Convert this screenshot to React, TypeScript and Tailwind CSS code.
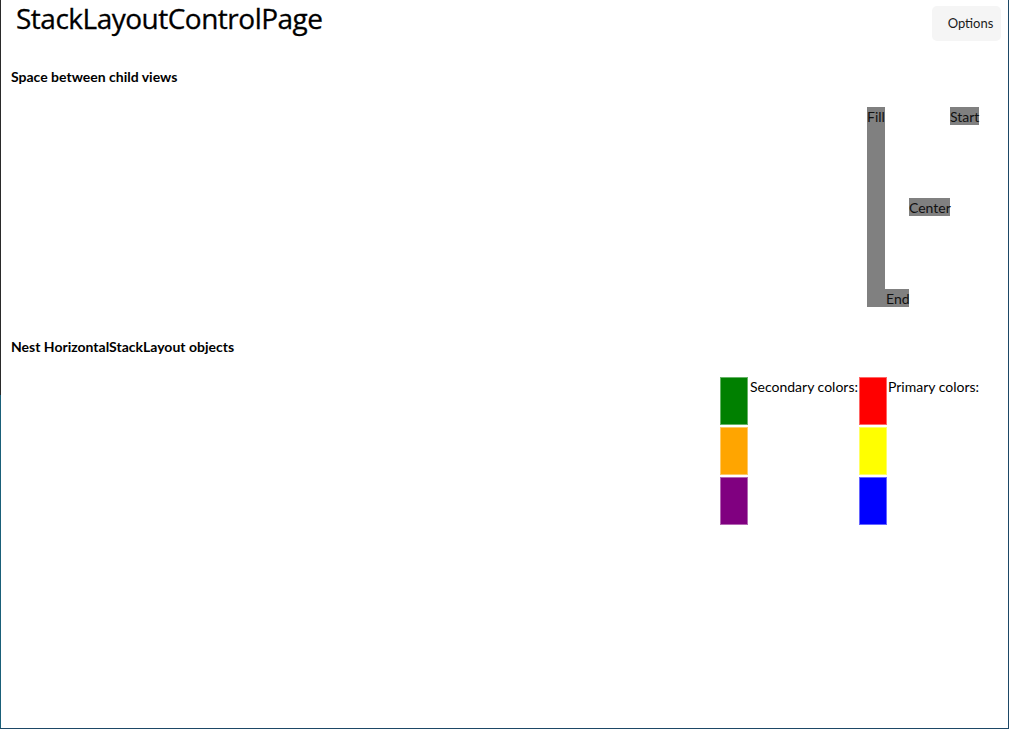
import React from 'react';

const font = { fontFamily: 'Lato, "Open Sans", sans-serif' };

const Tag: React.FC<{ label: string; className: string }> = ({ label, className }) => (
  <div className={`bg-[#808080] text-[14px] leading-[18px] text-[#111] whitespace-nowrap ${className}`}>
    {label}
  </div>
);

const Swatch: React.FC<{ color: string }> = ({ color }) => (
  <div className={`w-[28px] h-[48px] ring-1 ring-inset ring-white/40 ${color}`} />
);

const App: React.FC = () => {
  return (
    <div className="w-[1009px] h-[729px] flex bg-white border-r border-b border-[#1d4866] overflow-hidden" style={font}>
      {/* window edge: dark on top, teal lower down */}
      <div className="w-px flex flex-col shrink-0">
        <div className="h-[395px] bg-[#2a2a2a]" />
        <div className="flex-1 bg-[#1a6079]" />
      </div>

      <div className="flex-1 flex flex-col">
        <div className="flex items-start justify-between pl-[15px] pr-[7px]">
          <h1
            className="text-[28px] leading-[36px] text-black"
            style={{ fontFamily: '"Open Sans", sans-serif', letterSpacing: '-0.5px', WebkitTextStroke: '0.3px #000' }}
          >
            StackLayoutControlPage
          </h1>
          <button className="mt-[6px] w-[69px] h-[35px] rounded-[5px] bg-[#f5f5f5] text-[13px] text-[#1b1b1b] pl-[8px]">
            Options
          </button>
        </div>

        <h2 className="mt-[27px] pl-[10px] text-[14px] leading-[18px] font-bold text-black">Space between child views</h2>

        <div className="mt-[21px] h-[200px] flex justify-end pr-[29px]">
          <Tag label="Fill" className="w-[18px] self-stretch pt-[1px]" />
          <Tag label="End" className="w-[24px] h-[18px] self-end pl-[1px] pt-[1px]" />
          <Tag label="Center" className="w-[41px] h-[18px] self-center pt-[1px]" />
          <Tag label="Start" className="w-[29px] h-[18px] self-start pt-[1px]" />
        </div>

        <h2 className="mt-[31px] pl-[10px] text-[14px] leading-[18px] font-bold text-black">Nest HorizontalStackLayout objects</h2>

        <div className="mt-[21px] flex justify-end pr-[29px]">
          <div className="flex">
            <div className="flex flex-col gap-[2px]">
              <Swatch color="bg-[#008000]" />
              <Swatch color="bg-[#ffa500]" />
              <Swatch color="bg-[#800080]" />
            </div>
            <div className="w-[111px] pl-[2px] pt-[1px] text-[14px] leading-[18px] text-black whitespace-nowrap">Secondary colors:</div>
          </div>
          <div className="flex">
            <div className="flex flex-col gap-[2px]">
              <Swatch color="bg-[#ff0000]" />
              <Swatch color="bg-[#ffff00]" />
              <Swatch color="bg-[#0000ff]" />
            </div>
            <div className="w-[92px] pl-[1px] pt-[1px] text-[14px] leading-[18px] text-black whitespace-nowrap">Primary colors:</div>
          </div>
        </div>
      </div>
    </div>
  );
};

export default App;
